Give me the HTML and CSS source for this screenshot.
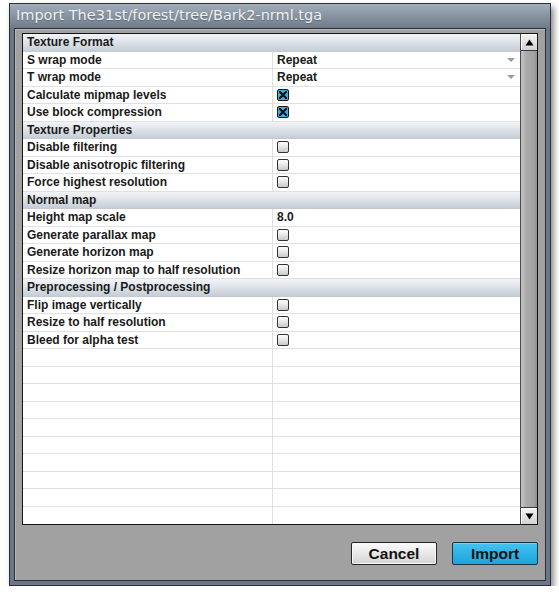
FILE: index.html
```html
<!DOCTYPE html>
<html>
<head>
<meta charset="utf-8">
<link rel="stylesheet" href="styles.css">
</head>
<body>
<div class="window">
  <div class="titlebar">Import The31st/forest/tree/Bark2-nrml.tga</div>
  <div class="body">
    <div class="panel">
      <div class="rows">
        <div class="row head">Texture Format</div>
        <div class="row"><div class="label">S wrap mode</div><div class="value">Repeat<span class="arrow"></span></div></div>
        <div class="row"><div class="label">T wrap mode</div><div class="value">Repeat<span class="arrow"></span></div></div>
        <div class="row"><div class="label">Calculate mipmap levels</div><div class="value"><svg class="cb" width="12" height="12" viewBox="0 0 12 12"><rect x="0.5" y="0.5" width="11" height="11" rx="1.5" fill="#38b4e6" stroke="#1a1a1a"/><path d="M3 3 L9 9 M9 3 L3 9" stroke="#000" stroke-width="2" stroke-linecap="square"/></svg></div></div>
        <div class="row"><div class="label">Use block compression</div><div class="value"><svg class="cb" width="12" height="12" viewBox="0 0 12 12"><rect x="0.5" y="0.5" width="11" height="11" rx="1.5" fill="#38b4e6" stroke="#1a1a1a"/><path d="M3 3 L9 9 M9 3 L3 9" stroke="#000" stroke-width="2" stroke-linecap="square"/></svg></div></div>
        <div class="row head">Texture Properties</div>
        <div class="row"><div class="label">Disable filtering</div><div class="value"><span class="box"></span></div></div>
        <div class="row"><div class="label">Disable anisotropic filtering</div><div class="value"><span class="box"></span></div></div>
        <div class="row"><div class="label">Force highest resolution</div><div class="value"><span class="box"></span></div></div>
        <div class="row head">Normal map</div>
        <div class="row"><div class="label">Height map scale</div><div class="value">8.0</div></div>
        <div class="row"><div class="label">Generate parallax map</div><div class="value"><span class="box"></span></div></div>
        <div class="row"><div class="label">Generate horizon map</div><div class="value"><span class="box"></span></div></div>
        <div class="row"><div class="label">Resize horizon map to half resolution</div><div class="value"><span class="box"></span></div></div>
        <div class="row head">Preprocessing / Postprocessing</div>
        <div class="row"><div class="label">Flip image vertically</div><div class="value"><span class="box"></span></div></div>
        <div class="row"><div class="label">Resize to half resolution</div><div class="value"><span class="box"></span></div></div>
        <div class="row"><div class="label">Bleed for alpha test</div><div class="value"><span class="box"></span></div></div>
        <div class="row"><div class="label"></div><div class="value"></div></div>
        <div class="row"><div class="label"></div><div class="value"></div></div>
        <div class="row"><div class="label"></div><div class="value"></div></div>
        <div class="row"><div class="label"></div><div class="value"></div></div>
        <div class="row"><div class="label"></div><div class="value"></div></div>
        <div class="row"><div class="label"></div><div class="value"></div></div>
        <div class="row"><div class="label"></div><div class="value"></div></div>
        <div class="row"><div class="label"></div><div class="value"></div></div>
        <div class="row"><div class="label"></div><div class="value"></div></div>
        <div class="row last"><div class="label"></div><div class="value"></div></div>
      </div>
      <div class="scrollbar">
        <div class="sb-btn up"><svg width="9" height="7" viewBox="0 0 9 7"><path d="M4.5 0.5 L8.5 6.5 L0.5 6.5 Z" fill="#000"/></svg></div>
        <div class="track"></div>
        <div class="sb-btn down"><svg width="9" height="7" viewBox="0 0 9 7"><path d="M0.5 0.5 L8.5 0.5 L4.5 6.5 Z" fill="#000"/></svg></div>
      </div>
    </div>
    <div class="buttons">
      <button class="btn cancel">Cancel</button>
      <button class="btn import">Import</button>
    </div>
  </div>
</div>
</body>
</html>
```

FILE: styles.css
```css
html, body {
  margin: 0;
  background: #ffffff;
}
body {
  font-family: "Liberation Sans", Arial, sans-serif;
}
.window {
  margin: 3px 0 0 9px;
  width: 540px;
  border: 1px solid #2b3137;
  background: #6b7786;
  box-shadow: 3px 4px 6px rgba(0, 0, 0, 0.45);
}
.titlebar {
  height: 24px;
  line-height: 23px;
  padding-left: 6px;
  background: linear-gradient(#a3aebb, #8a96a4 45%, #6f7b89);
  color: #eef1f4;
  font-family: "DejaVu Sans", sans-serif;
  font-size: 14.5px;
  text-shadow: 0 1px 1px rgba(0, 0, 0, 0.25);
  white-space: nowrap;
}
.body {
  margin: 0 4px 4px 4px;
  border: 1px solid #2b3137;
  background: #a1a1a1;
  padding: 4px 7px 15px 7px;
  box-shadow: inset 1px 1px 0 #b9b9b9;
}
.panel {
  display: flex;
  height: 490px;
  border: 1px solid #141414;
  background: #ffffff;
}
.rows {
  width: 497px;
  display: flex;
  flex-direction: column;
}
.row {
  height: 17.5px;
  flex: none;
  box-sizing: border-box;
  display: flex;
  border-bottom: 1px solid #dde0e6;
  font-size: 12px;
  font-weight: bold;
  color: #1a1a1a;
  line-height: 16px;
}
.row.last {
  border-bottom: none;
}
.row.head {
  background: linear-gradient(#f2f4f7, #dde2e8 50%, #c6cdd5);
  border-bottom: 1px solid #c3cad2;
  padding-left: 4px;
  align-items: center;
}
.label {
  width: 250px;
  box-sizing: border-box;
  padding-left: 4px;
  border-right: 1px solid #dcdfe3;
  display: flex;
  align-items: center;
  white-space: nowrap;
}
.value {
  flex: 1;
  display: flex;
  align-items: center;
  padding-left: 4px;
  padding-right: 5px;
}
.arrow {
  margin-left: auto;
  width: 0;
  height: 0;
  border-left: 4px solid transparent;
  border-right: 4px solid transparent;
  border-top: 4px solid #9c9c9c;
}
.box {
  width: 12px;
  height: 12px;
  box-sizing: border-box;
  border: 1px solid #333333;
  border-radius: 2px;
  background: linear-gradient(#ffffff, #e6e6e6 50%, #c8c8c8);
}
.cb {
  display: block;
}
.scrollbar {
  width: 16px;
  border-left: 1px solid #4a4a4a;
  display: flex;
  flex-direction: column;
}
.sb-btn {
  height: 16px;
  flex: none;
  display: flex;
  align-items: center;
  justify-content: center;
  background: linear-gradient(#f4f4f4, #d2d2d2);
  box-shadow: inset 1px 1px 0 #ffffff;
}
.sb-btn.up {
  border-bottom: 1px solid #3a3a3a;
}
.sb-btn.down {
  border-top: 1px solid #3a3a3a;
}
.track {
  flex: 1;
  background: linear-gradient(90deg, #c4c4c4, #aaaaaa 35%, #a2a2a2 80%, #8e8e8e);
}
.buttons {
  display: flex;
  justify-content: flex-end;
  gap: 15px;
  margin-top: 17px;
}
.btn {
  width: 86px;
  height: 23px;
  margin: 0;
  padding: 0;
  border: 1px solid #262626;
  border-radius: 2px;
  font-family: "Liberation Sans", Arial, sans-serif;
  font-weight: bold;
  font-size: 15.5px;
  color: #121212;
  line-height: 20px;
}
.btn.cancel {
  background: linear-gradient(#fbfbfb, #e8e8e8 50%, #d3d3d3);
  box-shadow: inset 0 0 0 1px #f8f8f8;
}
.btn.import {
  background: linear-gradient(#45c3f0, #2db3e6 50%, #1ea5db);
  border-color: #1d3442;
  box-shadow: inset 0 1px 0 #6dd2f5;
}
```
